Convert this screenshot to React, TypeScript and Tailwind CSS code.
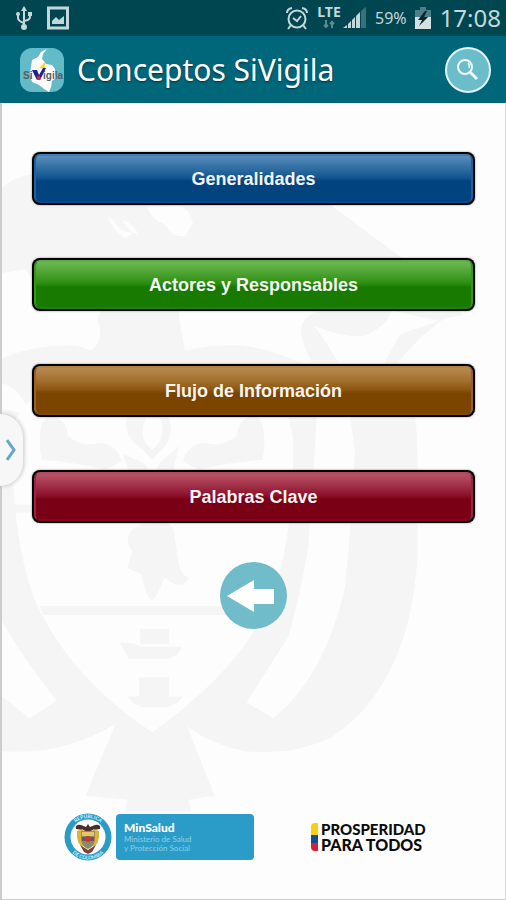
import React from "react";

const sections = [
  {
    label: "Generalidades",
    tone: "bg-[linear-gradient(180deg,#5a8dba_0%,#2f6ca3_28%,#125590_48%,#00437f_56%,#00437f_100%)] border-t-[#3f7fb8] border-x-[#1f61a0] border-b-[#07498a]",
  },
  {
    label: "Actores y Responsables",
    tone: "bg-[linear-gradient(180deg,#6cb753_0%,#48a02d_28%,#2b8d10_48%,#187b00_56%,#187b00_100%)] border-t-[#5cb042] border-x-[#36951a] border-b-[#1e8204]",
  },
  {
    label: "Flujo de Información",
    tone: "bg-[linear-gradient(180deg,#b98a50_0%,#a2702f_28%,#8d5611_48%,#7b4500_56%,#7b4500_100%)] border-t-[#b3824a] border-x-[#96622a] border-b-[#834c04]",
  },
  {
    label: "Palabras Clave",
    tone: "bg-[linear-gradient(180deg,#b75367_0%,#a02d46_28%,#8d1029_48%,#790015_56%,#790015_100%)] border-t-[#b34a60] border-x-[#9a2540] border-b-[#82051c]",
  },
];

function Watermark() {
  return (
    <svg
      className="pointer-events-none absolute left-0 top-0 h-auto w-full"
      viewBox="0 0 506 797"
      aria-hidden="true"
    >
      <g transform="translate(0 -103)" fill="#f5f5f5">
        {/* condor wings */}
        <path d="M0 188Q16 174 40 174Q80 168 120 176L290 180Q312 188 334 208L397 255Q425 272 440 296L464 316L444 320L420 340L398 364L385 364L400 336L440 322L392 312Q386 330 362 338Q340 338 314 327Q326 342 338 364L312 364Q300 344 301 328Q304 316 322 312L300 306L180 300L178 318L184 352Q206 346 240 347Q270 350 300 364Q320 386 316 430L308 550Q302 590 288 640L246 706L273 722Q325 680 345 590L350 535L355 455L350 418L385 364H400Q418 400 418 460L418 560Q410 690 330 742Q290 760 245 755Q210 748 186 730L214 800L188 804L190 816H124L126 804L84 800L114 728Q60 760 0 755V700L28 722L55 704Q20 660 0 624V360Q30 346 75 347L90 352Q104 340 96 322L100 310L32 284L24 270L0 274Z" />
        <g fill="#fdfdfd">
          <path d="M146 208Q150 220 165 226Q170 238 184 237L192 224Q190 210 178 207Z" />
          <path d="M106 217Q111 232 124 239L132 234Q117 232 112 221ZM121 221Q128 233 137 236Q134 224 121 221Z" />
          {/* shield interior */}
          <path d="M14 420Q50 368 100 372Q130 365 151 378Q172 365 202 372Q260 370 288 420L293 440Q294 560 262 620Q230 680 151 736Q72 684 36 610Q10 550 10 440Z" />
          <path d="M0 385Q20 390 28 418L0 410Z" />
        </g>
        {/* centre fruit and cornucopias */}
        <path d="M134 418H168Q174 440 160 452L151 462L142 452Q120 438 126 418Z" />
        <path d="M40 427Q44 414 56 420Q66 426 66 438Q80 450 98 445Q116 446 120 464L104 472Q70 464 40 462Q36 444 40 427Z" />
        <path d="M262 427Q258 414 246 420Q236 426 236 438Q222 450 204 445Q186 446 182 464L198 472Q232 464 262 462Q266 444 262 427Z" />
        <path d="M122 456L144 466L151 480L158 466L178 448L172 474H128Z" />
        <path
          d="M145 420Q138 434 145 446L151 452L157 446Q166 432 158 420Z"
          fill="#fdfdfd"
        />
        {/* bands */}
        <path d="M11 507H292V515H12ZM38 609H262L257 618H42Z" />
        {/* liberty cap */}
        <path d="M128 536Q136 524 158 525Q172 524 173 535L177 562Q178 576 188 581Q182 592 170 585L163 580Q160 592 151 604Q144 598 140 577L126 571L131 553Q124 546 128 536Z" />
        {/* ships */}
        <path d="M139 632H168V647H139ZM118 646Q130 645 140 650H181Q178 660 168 662H128ZM138 681H168V701H138ZM127 700H182Q176 710 164 711H142Q130 708 127 700Z" />
      </g>
    </svg>
  );
}

function StatusBar() {
  return (
    <div className="flex h-9 items-center justify-between bg-[#004651] pl-4 pr-[5px] font-['Noto_Sans',sans-serif] text-[#c4d7da]">
      <div className="flex items-center gap-[14px]">
        <svg className="h-6 w-4" viewBox="0 0 16 24" fill="none" stroke="currentColor" strokeWidth="2" aria-label="USB">
          <path d="M8 3V20M2 8V12Q2 15 8 17M14 8V11Q14 14 8 15" />
          <path d="M8 0L5 5H11Z" fill="currentColor" stroke="none" />
          <circle cx="8" cy="21" r="3" fill="currentColor" stroke="none" />
          <circle cx="2" cy="8" r="2" fill="currentColor" stroke="none" />
          <path d="M12 6H16V10H12Z" fill="currentColor" stroke="none" />
        </svg>
        <svg className="size-6" viewBox="0 0 24 24" aria-label="Imagen">
          <path d="M2.500 2H21.500V22H2.500Z" fill="none" stroke="currentColor" strokeWidth="3" />
          <path d="M6 18V15L10 11L13 14L18 10V18Z" fill="currentColor" />
        </svg>
      </div>
      <div className="flex items-center">
        <svg className="mr-2 size-6" viewBox="0 0 24 24" fill="none" stroke="currentColor" strokeWidth="2" aria-label="Alarma">
          <circle cx="12" cy="13" r="8.500" />
          <path d="M8 12L12 15L16 10M2 7Q2 3 7 2M22 7Q22 3 17 2M6 19L3 23M18 19L21 23" />
        </svg>
        <div className="flex h-6 w-6 flex-col items-center">
          <span className="text-sm font-bold leading-3">LTE</span>
          <svg className="h-3 w-4 text-[#5d8991]" viewBox="0 0 16 12" fill="none" stroke="currentColor" strokeWidth="2" aria-hidden="true">
            <path d="M5 2V10M3 7L5 9L7 7M11 10V3M9 6L11 4L13 6" />
          </svg>
        </div>
        <svg className="ml-[2px] h-[22px] w-6" viewBox="0 0 24 22" aria-label="Señal">
          <path d="M0 21L4 18V21ZM5 17L8 14V21H5ZM9 13L12 10V21H9ZM13 9L17 5V21H13Z" fill="#c4d7da" />
          <path d="M18 4L23 0V21H18Z" fill="#38717b" />
        </svg>
        <span className="ml-2 text-base leading-6">59%</span>
        <svg className="ml-2 h-6 w-4" viewBox="0 0 16 24" aria-label="Batería">
          <path d="M5 1H11V4H16V12H0V4H5Z" fill="#4c7f88" />
          <path d="M0 11H16V23H0Z" fill="#d3e1e3" />
          <path d="M10 5L3 14H7L4 20L13 11H9L12 5Z" fill="#05262c" />
        </svg>
        <span className="ml-[9px] text-2xl leading-8">17:08</span>
      </div>
    </div>
  );
}

function AppIcon() {
  return (
    <svg className="size-[46px]" viewBox="0 0 46 46" aria-label="SiVigila">
      <rect x="1" y="1" width="44" height="44" rx="12" fill="#63bac8" />
      <path d="M28 2L22 5L19 10L13 13L12 20L11 27L13 35L20 38L25 42L30 45L32 40L33 34L37 31L36 22L33 18L27 17L23 12L24 7Z" fill="#fff" />
      <path d="M20 21L26 15V22Z" fill="#f6dc31" />
      <g className="font-['Liberation_Sans',sans-serif] font-bold" fontSize="10">
        <text x="4" y="32" fill="#565d62">Si</text>
        <text x="24" y="32" fill="#565d62">igila</text>
      </g>
      <path d="M13 23H18L20 28L24 21H27L21 33H18Z" fill="#1e209a" />
      <path d="M18 30L20 28L22 31L21 33H18Z" fill="#d9262f" />
    </svg>
  );
}

function Seal() {
  return (
    <svg className="size-12 shrink-0" viewBox="0 0 48 48" aria-label="República de Colombia">
      <defs>
        <path id="seal-top" d="M5 24A19 19 0 0 1 43 24" />
        <path id="seal-bottom" d="M1.500 24A22.500 22.500 0 0 0 46.500 24" />
      </defs>
      <circle cx="24" cy="24" r="23.500" fill="#2b9cc8" />
      <circle cx="24" cy="24" r="17.500" fill="#fff" />
      <g className="font-['Lato',sans-serif] font-bold" fontSize="5" fill="#d8eef7" textAnchor="middle">
        <text><textPath href="#seal-top" startOffset="50%">REPÚBLICA</textPath></text>
        <text><textPath href="#seal-bottom" startOffset="50%">DE COLOMBIA</textPath></text>
      </g>
      <path d="M12 16Q11 11 17 12L22 14L24 11L26 14L31 12Q37 11 36 16L29 17L24 19L19 17Z" fill="#4a2d2c" />
      <path d="M13 18L19 16V34Q12 31 13 18ZM35 18L29 16V34Q36 31 35 18Z" fill="#d9b53c" />
      <path d="M17 18H31V27Q30 34 24 36Q18 34 17 27Z" fill="#9d8958" />
      <path d="M18 19H30V23H18Z" fill="#dfc96b" />
      <path d="M18 24H30V28H18Z" fill="#6f5364" />
      <circle cx="24" cy="26" r="3" fill="#bd3e42" />
      <path d="M20 30H28L24 35Z" fill="#6f8f8a" />
      <path d="M16 32L24 37L32 32L28 39L24 41L20 39Z" fill="#7a4436" />
    </svg>
  );
}

export default function App() {
  return (
    <div className="flex min-h-screen flex-col bg-[#fdfdfd]">
      <StatusBar />
      <header className="flex h-[67px] items-center bg-[#006679] pl-[19px] pr-[15px]">
        <AppIcon />
        <h1 className="ml-3 flex-1 font-['Noto_Sans',sans-serif] text-[30px] leading-10 text-white [text-shadow:0_1px_2px_#00323c]">
          Conceptos SiVigila
        </h1>
        <button
          type="button"
          aria-label="Buscar"
          className="flex size-[46px] items-center justify-center rounded-full border-2 border-[#e3f3f6] bg-[#6bbdca]"
        >
          <svg className="size-6" viewBox="0 0 24 24" fill="none" stroke="#f2fafb" aria-hidden="true">
            <circle cx="9" cy="9" r="7" strokeWidth="2" />
            <path d="M12 5Q14 7 13 10" strokeWidth="1.500" />
            <path d="M14 14L21 21" strokeWidth="3" />
          </svg>
        </button>
      </header>

      <main className="relative flex flex-1 flex-col border-b border-l-2 border-r border-b-[#c9cccf] border-l-[#cccccc] border-r-[#d5d5d5]">
        <Watermark />

        <nav className="relative mt-[49px] flex flex-col gap-[53px] px-[30px]">
          {sections.map((section) => (
            <button
              key={section.label}
              type="button"
              className="h-[53px] rounded-lg bg-black p-[2px] shadow-[0_0_2px_#00000080]"
            >
              <span
                className={`flex h-full items-center justify-center rounded-md border-2 font-['Liberation_Sans',Arial,sans-serif] text-lg font-bold text-[#f4f4f4] ${section.tone}`}
              >
                {section.label}
              </span>
            </button>
          ))}
        </nav>

        <button
          type="button"
          aria-label="Volver"
          className="relative mt-[39px] size-[67px] self-center rounded-full bg-[#70bcca]"
        >
          <svg className="size-full" viewBox="0 0 67 67" aria-hidden="true">
            <path d="M7 34L34 18V27H54V42H34V50Z" fill="#fff" />
          </svg>
        </button>

        <footer className="relative mb-[38px] mt-auto flex items-center pl-[62px] pr-8 font-['Lato',sans-serif]">
          <Seal />
          <div className="ml-1 h-[46px] w-[138px] shrink-0 rounded bg-[#2b9cc8] pl-2 pt-[7px] text-white">
            <p className="text-xs font-black leading-[14px]">MinSalud</p>
            <p className="text-[8px] leading-[9px] text-[#8fcde6]">
              Ministerio de Salud
              <br />y Protección Social
            </p>
          </div>
          <div className="ml-[57px] flex items-center gap-[3px]">
            <div className="flex h-7 w-[7px] flex-col overflow-hidden rounded-l-[4px]">
              <span className="h-3 bg-[#f9cf0e]" />
              <span className="h-2 bg-[#174a94]" />
              <span className="h-2 bg-[#d81e35]" />
            </div>
            <div className="whitespace-nowrap font-black text-[#0b0b0b]">
              <p className="text-[15px] leading-4">PROSPERIDAD</p>
              <p className="text-base leading-4">PARA TODOS</p>
            </div>
          </div>
        </footer>

        {/* edge handle of the side panel */}
        <button
          type="button"
          aria-label="Abrir panel"
          className="absolute -left-[2px] top-[311px] flex h-[72px] w-[23px] items-center justify-center rounded-r-[36px] bg-[#f7f7f7] shadow-[1px_0_4px_#00000038]"
        >
          <svg className="h-6 w-3" viewBox="0 0 12 24" fill="none" stroke="#63a9c1" strokeWidth="3" aria-hidden="true">
            <path d="M1 2L8 12L1 22" />
          </svg>
        </button>
      </main>
    </div>
  );
}
